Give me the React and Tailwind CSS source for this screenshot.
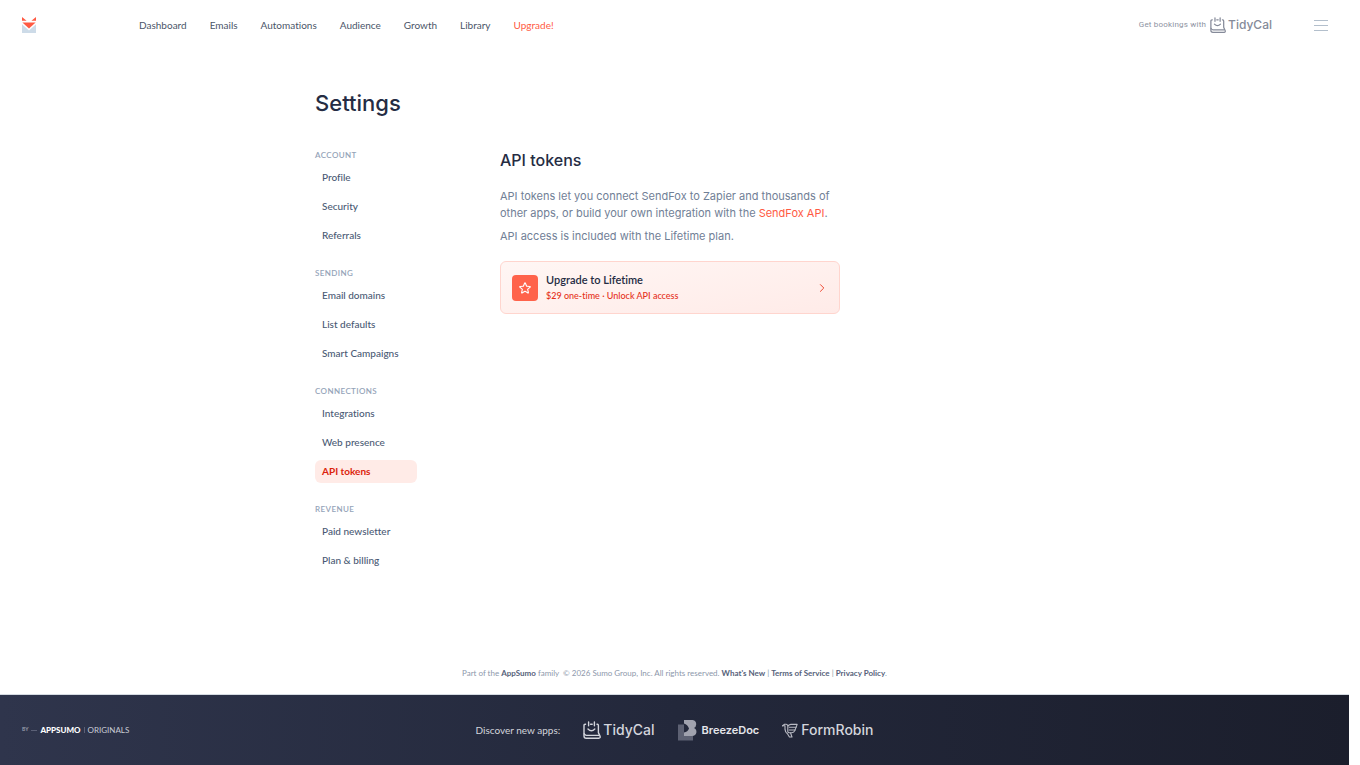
import React from "react";

const NAV = ["Dashboard", "Emails", "Automations", "Audience", "Growth", "Library"];

const SECTIONS = [
  { title: "Account", items: ["Profile", "Security", "Referrals"] },
  { title: "Sending", items: ["Email domains", "List defaults", "Smart Campaigns"] },
  { title: "Connections", items: ["Integrations", "Web presence", "API tokens"] },
  { title: "Revenue", items: ["Paid newsletter", "Plan & billing"] },
];

const ACTIVE_ITEM = "API tokens";

function FoxLogo() {
  return (
    <svg viewBox="0 0 14 16" className="h-4 w-3.5" aria-hidden="true">
      <path d="M0 0 L4.6 3.8 H0 Z M14 0 L9.4 3.8 H14 Z" fill="#ff5a43" />
      <path d="M0.4 5.4 H13.6 L7 11.6 Z" fill="#ff5a43" />
      <path d="M0 7.2 L7 13.6 L14 7.2 V16 H0 Z" fill="#cddbe8" />
    </svg>
  );
}

function TidyCalMark({ className }) {
  return (
    <svg
      viewBox="0 0 18 18"
      className={className}
      fill="none"
      stroke="currentColor"
      strokeWidth="1.4"
      strokeLinecap="round"
      strokeLinejoin="round"
      aria-hidden="true"
    >
      <path d="M2.6 3.2 H2.2 Q1 3.2 1 4.4 V15 Q1 17.2 3.2 17.2 H15.8 Q17.6 17 17.1 15.4 L15.4 11.6 V4.4 Q15.4 3.2 14.4 3.2 H14" />
      <path d="M7.6 3.2 H9.2" />
      <path d="M5.6 0.9 V4.8 M11.4 0.9 V4.8" />
      <path d="M5 8 Q8.4 11.6 11.8 8" />
      <path d="M1.2 12.8 Q1.8 14.4 3.4 14.4 H15.6" />
    </svg>
  );
}

function BreezeDocMark() {
  return (
    <svg viewBox="0 0 19 21" className="h-[21px] w-[19px]" aria-hidden="true">
      <path d="M0 4.6 H6 V15.6 H15 V20.6 H0 Z" fill="#5d6173" />
      <path
        d="M6 0 H14.6 Q18.4 0.6 18.2 4.6 Q18 7.4 16 8 Q18.8 9.4 18.4 12.6 Q17.8 16 14 16 H6 V12.4 Q9.8 12 11 8.6 Q9.6 4.4 6 3.4 Z"
        fill="#a0a2ae"
      />
    </svg>
  );
}

function FormRobinMark() {
  return (
    <svg
      viewBox="0 0 16 15"
      className="h-[15px] w-4"
      fill="none"
      stroke="#b9bbc4"
      strokeWidth="1.1"
      strokeLinejoin="round"
      strokeLinecap="round"
      aria-hidden="true"
    >
      <path d="M0.6 2.8 L2.6 1.2 H4.2 Q5.8 1.4 5.8 3 V8.6 Q6 9.8 7.2 9.8 H9.8 Q12 9.6 12.8 7.6 L15.2 1.4 H8.8 Q6.6 1.6 5.8 3.6" />
      <path d="M0.6 2.8 H3 V6.4 Q3.2 9.4 5.6 11 L7.4 14 H10 L8.6 10" />
      <path d="M7.2 4.2 H14 M7.2 7 H13" />
    </svg>
  );
}

function StarIcon() {
  return (
    <svg
      viewBox="0 0 24 24"
      className="size-3.5"
      fill="none"
      stroke="#ffffff"
      strokeWidth="1.9"
      strokeLinejoin="round"
      strokeLinecap="round"
      aria-hidden="true"
    >
      <path d="M11.48 3.5a.56.56 0 0 1 1.04 0l2.12 5.11a.56.56 0 0 0 .48.35l5.52.44c.5.04.7.66.32.99l-4.2 3.6a.56.56 0 0 0-.19.56l1.29 5.38a.56.56 0 0 1-.84.61l-4.73-2.88a.56.56 0 0 0-.58 0l-4.73 2.88a.56.56 0 0 1-.84-.61l1.29-5.38a.56.56 0 0 0-.19-.56l-4.2-3.6a.56.56 0 0 1 .32-.99l5.52-.44a.56.56 0 0 0 .48-.35z" />
    </svg>
  );
}

function ChevronIcon() {
  return (
    <svg viewBox="0 0 12 12" className="size-3" fill="none" stroke="#ef4a34" strokeWidth="1" strokeLinecap="round" strokeLinejoin="round" aria-hidden="true">
      <path d="M4.4 2.6 L7.8 6 L4.4 9.4" />
    </svg>
  );
}

function Header() {
  return (
    <header className="flex h-[50px] items-center pl-[22px] pr-[21px]">
      <a href="#home" aria-label="SendFox home" className="w-[117px] shrink-0">
        <FoxLogo />
      </a>
      <nav className="flex gap-[23px] text-[10px] text-[#4a5568]">
        {NAV.map((label) => (
          <a key={label} href={"#" + label.toLowerCase()}>
            {label}
          </a>
        ))}
        <a href="#upgrade" className="text-[#ff5a43]">
          Upgrade!
        </a>
      </nav>
      <div className="ml-auto flex items-center gap-[42px]">
        <a href="#tidycal" className="flex items-center gap-1 text-[#858a99]">
          <span className="font-[Roboto,sans-serif] text-[8px] tracking-wide text-[#8d929f]">Get bookings with</span>
          <span className="flex items-center gap-0.5">
            <TidyCalMark className="size-4" />
            <span className="font-[Inter,sans-serif] text-xs font-medium">TidyCal</span>
          </span>
        </a>
        <button type="button" aria-label="Open menu" className="flex w-3.5 flex-col gap-1">
          <span className="h-px w-full bg-[#b3bfcc]" />
          <span className="h-px w-full bg-[#b3bfcc]" />
          <span className="h-px w-full bg-[#b3bfcc]" />
        </button>
      </div>
    </header>
  );
}

function Sidebar() {
  return (
    <nav aria-label="Settings" className="flex w-[102px] shrink-0 flex-col gap-5">
      {SECTIONS.map((section) => (
        <section key={section.title}>
          <h2 className="mb-[5px] text-[8px] leading-3 font-semibold tracking-wider text-[#94a3b8] uppercase">{section.title}</h2>
          <ul className="flex flex-col gap-1.5">
            {section.items.map((item) => (
              <li key={item}>
                <a
                  href={"#" + item.toLowerCase().replace(/[^a-z]+/g, "-")}
                  aria-current={item === ACTIVE_ITEM ? "page" : undefined}
                  className={
                    item === ACTIVE_ITEM
                      ? "flex h-[23px] items-center rounded-md bg-[#ffebe7] px-[7px] text-[10px] font-bold text-[#dc230b]"
                      : "flex h-[23px] items-center rounded-md px-[7px] text-[10px] font-medium whitespace-nowrap text-[#4a5a74]"
                  }
                >
                  {item}
                </a>
              </li>
            ))}
          </ul>
        </section>
      ))}
    </nav>
  );
}

function Content() {
  return (
    <section className="w-full max-w-[340px]">
      <h2 className="font-[Inter,sans-serif] text-base leading-[22px] font-medium text-[#252c43]">API tokens</h2>
      <p className="mt-[17px] font-[Inter,sans-serif] text-[11px] leading-[17px] text-[#718096]">
        API tokens let you connect SendFox to Zapier and thousands of other apps, or build your own integration with the{" "}
        <a href="#api" className="text-[#ff5a43]">
          SendFox API
        </a>
        .
      </p>
      <p className="mt-1.5 font-[Inter,sans-serif] text-[11px] leading-[17px] text-[#718096]">
        API access is included with the Lifetime plan.
      </p>
      <a
        href="#lifetime"
        className="mt-4 flex h-[53px] items-center rounded-md border border-[#ffd5ce] bg-linear-to-br from-[#fff6f4] to-[#ffebe8] px-[11px]"
      >
        <span className="flex size-[26px] items-center justify-center rounded bg-[#ff634b]">
          <StarIcon />
        </span>
        <span className="ml-2 flex flex-col">
          <span className="text-[11px] leading-[17px] font-semibold text-[#252c43]">Upgrade to Lifetime</span>
          <span className="text-[9px] leading-4 font-medium text-[#e5311a]">$29 one-time · Unlock API access</span>
        </span>
        <span className="ml-auto">
          <ChevronIcon />
        </span>
      </a>
    </section>
  );
}

function Footer() {
  return (
    <footer className="mt-auto">
      <p className="pt-4 pb-3.5 text-center text-[8px] leading-[14px] text-[#8d98ab]">
        Part of the <a href="#appsumo" className="font-bold text-[#56627a]">AppSumo</a> family &nbsp;© 2026 Sumo Group, Inc. All
        rights reserved. <a href="#new" className="font-bold text-[#56627a]">What's New</a> |{" "}
        <a href="#terms" className="font-bold text-[#56627a]">Terms of Service</a> |{" "}
        <a href="#privacy" className="font-bold text-[#56627a]">Privacy Policy</a>.
      </p>
      <div className="grid h-[71px] grid-cols-[1fr_auto_1fr] items-center border-t border-[#d5dbe2] bg-linear-to-r from-[#2f354c] via-[#23283b] to-[#1b1e2c] px-[22px]">
        <a href="#originals" className="flex items-center text-[8px] text-[#c9ccd6]">
          <span className="text-[5px] font-bold text-[#9a9eac]">BY</span>
          <span className="mx-[3px] h-px w-1.5 bg-[#5b6076]" />
          <span className="font-black text-white">APPSUMO</span>
          <span className="mx-[3px] h-1.5 w-px bg-[#5b6076]" />
          <span>ORIGINALS</span>
        </a>
        <div className="flex items-center gap-[23px] text-[#d3d5dc]">
          <span className="text-[10px]">Discover new apps:</span>
          <a href="#tidycal" className="flex items-center gap-0.5">
            <TidyCalMark className="size-[18px]" />
            <span className="font-[Inter,sans-serif] text-sm font-medium">TidyCal</span>
          </a>
          <a href="#breezedoc" className="flex items-center gap-[5px]">
            <BreezeDocMark />
            <span className="font-[Inter,sans-serif] text-[11px] font-semibold text-[#e4e5ea]">BreezeDoc</span>
          </a>
          <a href="#formrobin" className="flex items-center gap-[3px]">
            <FormRobinMark />
            <span className="font-[Inter,sans-serif] text-sm font-medium">FormRobin</span>
          </a>
        </div>
      </div>
    </footer>
  );
}

export default function App() {
  return (
    <div className="flex min-h-screen flex-col bg-white pr-[11px] font-[Lato,sans-serif] [font-variant-ligatures:none]">
      <Header />
      <main className="mx-auto w-full max-w-[719px] pt-[37px]">
        <h1 className="font-[Inter,sans-serif] text-[22px] leading-8 font-medium text-[#252c43]">Settings</h1>
        <div className="mt-[30px] flex gap-[83px]">
          <Sidebar />
          <Content />
        </div>
      </main>
      <Footer />
    </div>
  );
}
